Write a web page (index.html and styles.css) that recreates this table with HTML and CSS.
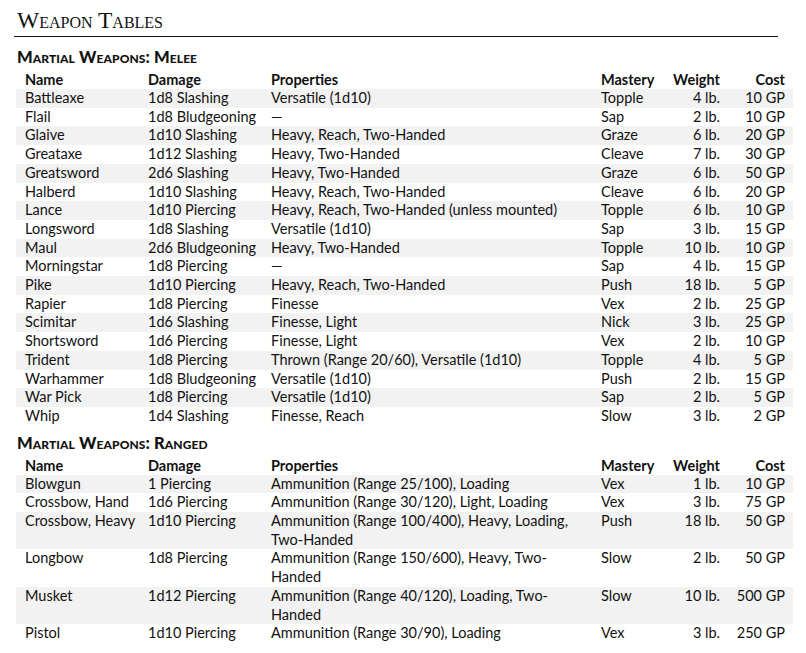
FILE: index.html
```html
<!DOCTYPE html>
<html>
<head>
<meta charset="utf-8">
<link rel="stylesheet" href="styles.css">
</head>
<body>
<div class="page">
  <h1 class="title">Weapon Tables</h1>

  <h2 class="section">Martial Weapons: Melee</h2>
  <table class="weapons">
    <colgroup>
      <col class="c-name"><col class="c-dmg"><col class="c-prop"><col class="c-mast"><col class="c-wt"><col class="c-cost">
    </colgroup>
    <thead>
      <tr><th class="name">Name</th><th>Damage</th><th>Properties</th><th>Mastery</th><th class="num">Weight</th><th class="num cost">Cost</th></tr>
    </thead>
    <tbody>
      <tr><td class="name">Battleaxe</td><td>1d8 Slashing</td><td>Versatile (1d10)</td><td>Topple</td><td class="num">4 lb.</td><td class="num cost">10 GP</td></tr>
      <tr><td class="name">Flail</td><td>1d8 Bludgeoning</td><td>—</td><td>Sap</td><td class="num">2 lb.</td><td class="num cost">10 GP</td></tr>
      <tr><td class="name">Glaive</td><td>1d10 Slashing</td><td>Heavy, Reach, Two-Handed</td><td>Graze</td><td class="num">6 lb.</td><td class="num cost">20 GP</td></tr>
      <tr><td class="name">Greataxe</td><td>1d12 Slashing</td><td>Heavy, Two-Handed</td><td>Cleave</td><td class="num">7 lb.</td><td class="num cost">30 GP</td></tr>
      <tr><td class="name">Greatsword</td><td>2d6 Slashing</td><td>Heavy, Two-Handed</td><td>Graze</td><td class="num">6 lb.</td><td class="num cost">50 GP</td></tr>
      <tr><td class="name">Halberd</td><td>1d10 Slashing</td><td>Heavy, Reach, Two-Handed</td><td>Cleave</td><td class="num">6 lb.</td><td class="num cost">20 GP</td></tr>
      <tr><td class="name">Lance</td><td>1d10 Piercing</td><td>Heavy, Reach, Two-Handed (unless mounted)</td><td>Topple</td><td class="num">6 lb.</td><td class="num cost">10 GP</td></tr>
      <tr><td class="name">Longsword</td><td>1d8 Slashing</td><td>Versatile (1d10)</td><td>Sap</td><td class="num">3 lb.</td><td class="num cost">15 GP</td></tr>
      <tr><td class="name">Maul</td><td>2d6 Bludgeoning</td><td>Heavy, Two-Handed</td><td>Topple</td><td class="num">10 lb.</td><td class="num cost">10 GP</td></tr>
      <tr><td class="name">Morningstar</td><td>1d8 Piercing</td><td>—</td><td>Sap</td><td class="num">4 lb.</td><td class="num cost">15 GP</td></tr>
      <tr><td class="name">Pike</td><td>1d10 Piercing</td><td>Heavy, Reach, Two-Handed</td><td>Push</td><td class="num">18 lb.</td><td class="num cost">5 GP</td></tr>
      <tr><td class="name">Rapier</td><td>1d8 Piercing</td><td>Finesse</td><td>Vex</td><td class="num">2 lb.</td><td class="num cost">25 GP</td></tr>
      <tr><td class="name">Scimitar</td><td>1d6 Slashing</td><td>Finesse, Light</td><td>Nick</td><td class="num">3 lb.</td><td class="num cost">25 GP</td></tr>
      <tr><td class="name">Shortsword</td><td>1d6 Piercing</td><td>Finesse, Light</td><td>Vex</td><td class="num">2 lb.</td><td class="num cost">10 GP</td></tr>
      <tr><td class="name">Trident</td><td>1d8 Piercing</td><td>Thrown (Range 20/60), Versatile (1d10)</td><td>Topple</td><td class="num">4 lb.</td><td class="num cost">5 GP</td></tr>
      <tr><td class="name">Warhammer</td><td>1d8 Bludgeoning</td><td>Versatile (1d10)</td><td>Push</td><td class="num">2 lb.</td><td class="num cost">15 GP</td></tr>
      <tr><td class="name">War Pick</td><td>1d8 Piercing</td><td>Versatile (1d10)</td><td>Sap</td><td class="num">2 lb.</td><td class="num cost">5 GP</td></tr>
      <tr><td class="name">Whip</td><td>1d4 Slashing</td><td>Finesse, Reach</td><td>Slow</td><td class="num">3 lb.</td><td class="num cost">2 GP</td></tr>
    </tbody>
  </table>

  <h2 class="section section-2">Martial Weapons: Ranged</h2>
  <table class="weapons">
    <colgroup>
      <col class="c-name"><col class="c-dmg"><col class="c-prop"><col class="c-mast"><col class="c-wt"><col class="c-cost">
    </colgroup>
    <thead>
      <tr><th class="name">Name</th><th>Damage</th><th>Properties</th><th>Mastery</th><th class="num">Weight</th><th class="num cost">Cost</th></tr>
    </thead>
    <tbody>
      <tr><td class="name">Blowgun</td><td>1 Piercing</td><td>Ammunition (Range 25/100), Loading</td><td>Vex</td><td class="num">1 lb.</td><td class="num cost">10 GP</td></tr>
      <tr><td class="name">Crossbow, Hand</td><td>1d6 Piercing</td><td>Ammunition (Range 30/120), Light, Loading</td><td>Vex</td><td class="num">3 lb.</td><td class="num cost">75 GP</td></tr>
      <tr><td class="name">Crossbow, Heavy</td><td>1d10 Piercing</td><td>Ammunition (Range 100/400), Heavy, Loading,<br>Two-Handed</td><td>Push</td><td class="num">18 lb.</td><td class="num cost">50 GP</td></tr>
      <tr><td class="name">Longbow</td><td>1d8 Piercing</td><td>Ammunition (Range 150/600), Heavy, Two-<br>Handed</td><td>Slow</td><td class="num">2 lb.</td><td class="num cost">50 GP</td></tr>
      <tr><td class="name">Musket</td><td>1d12 Piercing</td><td>Ammunition (Range 40/120), Loading, Two-<br>Handed</td><td>Slow</td><td class="num">10 lb.</td><td class="num cost">500 GP</td></tr>
      <tr><td class="name">Pistol</td><td>1d10 Piercing</td><td>Ammunition (Range 30/90), Loading</td><td>Vex</td><td class="num">3 lb.</td><td class="num cost">250 GP</td></tr>
    </tbody>
  </table>
</div>
</body>
</html>
```

FILE: styles.css
```css
html, body {
  margin: 0;
  padding: 0;
  background: #ffffff;
}

.page {
  padding: 7px 28px 0 14px;
  color: #111111;
  font-family: Lato, "Open Sans", sans-serif;
}

.title {
  margin: 0;
  padding: 0 0 3px 3px;
  font-family: "Liberation Serif", serif;
  font-variant: small-caps;
  font-weight: normal;
  font-size: 23.5px;
  line-height: 26px;
  border-bottom: 1px solid #111111;
}

.section {
  margin: 11px 0 4px 3px;
  font-family: Lato, sans-serif;
  font-variant: small-caps;
  font-weight: 900;
  font-size: 16.5px;
  letter-spacing: 0.1px;
  line-height: 19px;
}

.section-2 {
  margin-top: 8px;
}

.weapons {
  margin-left: 2px;
  border-collapse: collapse;
  table-layout: fixed;
  width: 777px;
  font-size: 14.5px;
  line-height: 18.7px;
}

.c-name { width: 132px; }
.c-dmg { width: 123px; }
.c-prop { width: 330px; }
.c-mast { width: 65px; }
.c-wt { width: 54px; }
.c-cost { width: 73px; }

.weapons th,
.weapons td {
  padding: 0;
  text-align: left;
  vertical-align: top;
  white-space: nowrap;
}

.weapons th {
  font-weight: bold;
  line-height: 18px;
}

.weapons .name {
  padding-left: 9px;
}

.weapons .num {
  text-align: right;
}

.weapons .cost {
  padding-right: 8px;
}

.weapons tbody tr:nth-child(odd) {
  background: #f2f2f2;
}
```
